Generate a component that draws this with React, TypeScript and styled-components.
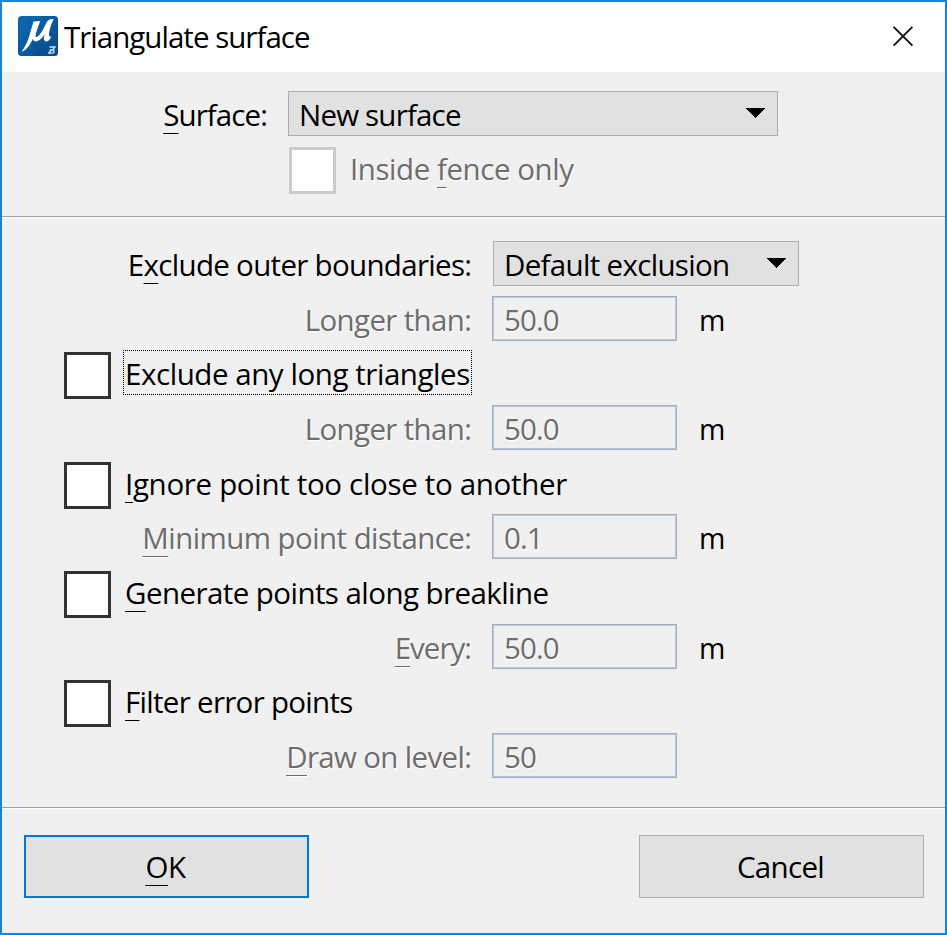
import React from "react";
import styled, { createGlobalStyle } from "styled-components";

const GlobalStyle = createGlobalStyle`
  * { box-sizing: border-box; }
  html, body { margin: 0; padding: 0; }
  body { font-family: "Open Sans", "Segoe UI", "Noto Sans", sans-serif; font-size: 29.5px; color: #000; background: #f0f0f0; }
`;

const Dialog = styled.div`
  width: 947px;
  height: 935px;
  display: flex;
  flex-direction: column;
  border: 2px solid #1883d7;
  background: #f0f0f0;
  overflow: hidden;
`;

const TitleBar = styled.header`
  height: 70px;
  flex: none;
  display: flex;
  align-items: flex-start;
  background: #fff;
  padding: 14px 31px 0 16px;
`;

const Title = styled.h1`
  flex: 1;
  margin: -2px 0 0 6px;
  font-size: inherit;
  font-weight: 400;
  line-height: 45px;
  letter-spacing: -0.98px;
  white-space: nowrap;
`;

const CloseButton = styled.button`
  width: 22px;
  height: 22px;
  margin-top: 9px;
  padding: 0;
  border: 0;
  background: none;
  svg { display: block; }
`;

const TargetSection = styled.section`
  height: 144px;
  flex: none;
  display: grid;
  grid-template-columns: 266px 1fr;
  grid-template-rows: 54px 45px;
  column-gap: 20px;
  padding-top: 19px;
`;

const Divider = styled.hr`
  flex: none;
  width: 100%;
  height: 2px;
  margin: 0;
  border: 0;
  border-top: 1px solid #a0a0a0;
  background: #fff;
`;

const OptionsSection = styled.section`
  height: 589px;
  flex: none;
  display: grid;
  grid-template-rows: 55px 54px 55px 55px 54px 55px 55px 54px 55px 45px;
  padding-top: 23px;
`;

const FieldRow = styled.div`
  display: grid;
  grid-template-columns: 470px 1fr;
  column-gap: 20px;
`;

const FieldControls = styled.div`
  display: flex;
  align-items: flex-start;
`;

const Label = styled.label<{ $disabled?: boolean; $spacing?: number }>`
  height: 45px;
  line-height: 45px;
  padding: 1px ${(p) => -(p.$spacing ?? 0)}px 0 0;
  text-align: right;
  white-space: nowrap;
  letter-spacing: ${(p) => p.$spacing ?? 0}px;
  color: ${(p) => (p.$disabled ? "#6d6d6d" : "#000")};
  text-shadow: ${(p) => (p.$disabled ? "1px 1px 0 #fff" : "none")};
`;

const Mnemonic = styled.span`
  text-decoration: underline;
  text-decoration-thickness: 1px;
  text-underline-offset: 7px;
  text-decoration-skip-ink: none;
`;

const Select = styled.button<{ $width: number; $spacing?: number; $indent?: number }>`
  width: ${(p) => p.$width}px;
  height: 45px;
  margin-left: ${(p) => p.$indent ?? 0}px;
  padding: 2px 12px 0 10px;
  display: flex;
  justify-content: space-between;
  border: 1px solid #adadad;
  background: #e1e1e1;
  font: inherit;
  color: inherit;
  line-height: 42px;
  text-align: left;
  white-space: nowrap;
  letter-spacing: ${(p) => p.$spacing ?? 0}px;
  svg { flex: none; margin-top: 14px; }
`;

const NumberBox = styled.div<{ $accent?: boolean }>`
  width: 185px;
  height: 45px;
  padding: 1px 0 0 11px;
  border: 1px solid #abadb3;
  box-shadow: inset 0 0 0 1px ${(p) => (p.$accent ? "#a9cbee" : "#b7cbe3")};
  line-height: 43px;
  letter-spacing: -0.9px;
  color: #6d6d6d;
  text-shadow: 1px 1px 0 #fff;
`;

const Unit = styled.span`
  margin-left: 22px;
  padding-top: 2px;
  font-size: 28.5px;
  line-height: 45px;
`;

const CheckRow = styled.div<{ $indent: number }>`
  display: flex;
  align-items: flex-start;
  padding-left: ${(p) => p.$indent}px;
`;

const CheckBox = styled.span<{ $disabled?: boolean }>`
  flex: none;
  width: 47px;
  height: 47px;
  margin: 2px 12px 0 0;
  border: 3px solid ${(p) => (p.$disabled ? "#cccccc" : "#333333")};
  background: #fff;
`;

const CheckLabel = styled(Label)<{ $focused?: boolean; $width?: number }>`
  ${(p) => (p.$width ? `width: ${p.$width}px;` : "")}
  padding: ${(p) => (p.$focused ? "0 0 0 1px" : "1px 0 0 2px")};
  border: ${(p) => (p.$focused ? "1px dotted #000" : "0")};
  text-align: left;
`;

const Footer = styled.footer`
  flex: 1;
  display: flex;
  justify-content: space-between;
  padding: 26px 21px 0 22px;
`;

const PushButton = styled.button<{ $primary?: boolean; $spacing?: number }>`
  width: 285px;
  height: 63px;
  padding: 0 2px 0 0;
  border: ${(p) => (p.$primary ? "2px solid #0078d7" : "1px solid #adadad")};
  background: #e1e1e1;
  font: inherit;
  color: inherit;
  letter-spacing: ${(p) => p.$spacing ?? 0}px;
`;

const Logo = () => (
  <svg width="40" height="40" viewBox="0 0 40 40">
    <defs>
      <linearGradient id="logoBlue" x1="0" y1="0" x2="1" y2="1">
        <stop offset="0" stopColor="#0f6bb3" />
        <stop offset="1" stopColor="#064886" />
      </linearGradient>
    </defs>
    <rect width="40" height="40" rx="3.5" fill="url(#logoBlue)" />
    <path
      d="M15.6 5.6 L22.2 5 C20.4 10 18.2 16 17.6 19.4 C17.4 21.8 19.6 21.4 21.8 18.6 C25 14.4 27 9 29.4 5.2 C31 3.4 33.6 2.6 35.8 3 C33.4 7.6 31.6 13 31 17.6 C30.8 20 31.4 21.2 33.4 20.4 C31.8 24.6 28 26.6 26.4 24.6 C25.4 23 26 20.4 26.8 18 C24 22.4 20.6 25.6 17.4 25.4 C15.6 25.2 15 24 14.8 22.8 C12.6 28 9 34 3.4 36 C6.8 31.6 9 27 10.8 21.6 C12.6 16.4 14.2 9.4 15.6 5.6 Z"
      fill="#fff"
    />
    <path d="M31.5 31 H37 L34.8 34 H31.8 M34.8 34 C36.8 34.2 36.4 37.2 34.2 37.2 H30.8 L33.2 34" fill="none" stroke="#d5e4f1" strokeWidth="1.3" />
  </svg>
);

const Arrow = () => (
  <svg width="19" height="10" viewBox="0 0 19 10" shapeRendering="crispEdges">
    <path d="M0 0 H19 L9.5 10 Z" fill="#000" />
  </svg>
);

const CloseIcon = () => (
  <svg width="22" height="22" viewBox="0 0 22 22">
    <path d="M1.6 1.8 L20.4 20.6 M20.4 1.8 L1.6 20.6" stroke="#111" strokeWidth="1.9" />
  </svg>
);

type FieldProps = {
  children: React.ReactNode;
  value: string;
  unit?: string;
  accent?: boolean;
  spacing?: number;
};

const Field = ({ children, value, unit, accent, spacing }: FieldProps) => (
  <FieldRow>
    <Label $disabled $spacing={spacing}>{children}</Label>
    <FieldControls>
      <NumberBox $accent={accent}>{value}</NumberBox>
      {unit && <Unit>{unit}</Unit>}
    </FieldControls>
  </FieldRow>
);

export default function App() {
  return (
    <>
      <GlobalStyle />
      <Dialog>
        <TitleBar>
          <Logo />
          <Title>Triangulate surface</Title>
          <CloseButton aria-label="Close"><CloseIcon /></CloseButton>
        </TitleBar>
        <TargetSection>
          <Label $spacing={-0.9}><Mnemonic>S</Mnemonic>urface:</Label>
          <Select $width={490} $spacing={-0.8}>New surface<Arrow /></Select>
          <span />
          <CheckRow $indent={1}>
            <CheckBox $disabled />
            <CheckLabel $disabled $spacing={-0.45}>Inside <Mnemonic>f</Mnemonic>ence only</CheckLabel>
          </CheckRow>
        </TargetSection>
        <Divider />
        <OptionsSection>
          <FieldRow>
            <Label $spacing={-0.69}>E<Mnemonic>x</Mnemonic>clude outer boundaries:</Label>
            <FieldControls>
              <Select $width={306} $indent={1} $spacing={-0.68}>Default exclusion<Arrow /></Select>
            </FieldControls>
          </FieldRow>
          <Field value="50.0" unit="m" spacing={-0.65}>Longer than:</Field>
          <CheckRow $indent={62}>
            <CheckBox />
            <CheckLabel $focused $width={349} $spacing={-0.44}>Exclude any long triangles</CheckLabel>
          </CheckRow>
          <Field value="50.0" unit="m" accent spacing={-0.65}>Longer than:</Field>
          <CheckRow $indent={62}>
            <CheckBox />
            <CheckLabel $spacing={-0.32}><Mnemonic>I</Mnemonic>gnore point too close to another</CheckLabel>
          </CheckRow>
          <Field value="0.1" unit="m" spacing={-0.58}><Mnemonic>M</Mnemonic>inimum point distance:</Field>
          <CheckRow $indent={62}>
            <CheckBox />
            <CheckLabel $spacing={-0.56}><Mnemonic>G</Mnemonic>enerate points along breakline</CheckLabel>
          </CheckRow>
          <Field value="50.0" unit="m" spacing={-1}><Mnemonic>E</Mnemonic>very:</Field>
          <CheckRow $indent={62}>
            <CheckBox />
            <CheckLabel $spacing={-0.7}><Mnemonic>F</Mnemonic>ilter error points</CheckLabel>
          </CheckRow>
          <Field value="50" accent spacing={-0.66}><Mnemonic>D</Mnemonic>raw on level:</Field>
        </OptionsSection>
        <Divider />
        <Footer>
          <PushButton $primary $spacing={-0.4}><Mnemonic>O</Mnemonic>K</PushButton>
          <PushButton $spacing={-0.7}>Cancel</PushButton>
        </Footer>
      </Dialog>
    </>
  );
}
